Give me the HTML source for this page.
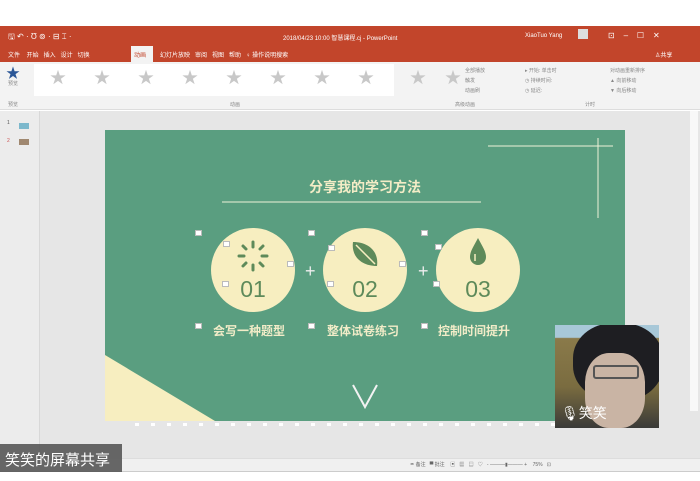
<!DOCTYPE html>
<html><head><meta charset="utf-8"><style>
*{margin:0;padding:0;box-sizing:border-box}
body{width:700px;height:481px;background:#fff;position:relative;overflow:hidden;font-family:"Liberation Sans","Noto Sans CJK SC",sans-serif}
.a{position:absolute}
.t{font-size:6px;color:#fff}
.rt{font-size:5px;color:#888}
.circ{position:absolute;width:84px;height:84px;border-radius:50%;background:#f7eec0}
.num{position:absolute;width:100%;top:50px;text-align:center;font-size:23px;color:#5e8a5a;line-height:22px}
.lbl{position:absolute;font-size:12px;font-weight:bold;color:#f2ecc8}
.sq{position:absolute;width:7px;height:6px;background:#fff;border:1px solid #bbb;font-size:4px}
.plus{position:absolute;color:#eee;font-size:18px;line-height:18px}
</style></head><body>
<div class="a" style="left:0;top:26px;width:700px;height:36px;background:#c2452b"></div>
<div class="a t" style="left:8px;top:31px;font-size:8px">🖫 ↶ · Ʊ ⊚ · ⊟ ⌶ ·</div>
<div class="a t" style="left:283px;top:33px">2018/04/23 10:00 智慧课程.cj - PowerPoint</div>
<div class="a t" style="left:525px;top:33px">XiaoTuo Yang</div>
<div class="a" style="left:578px;top:29px;width:10px;height:10px;background:#ddd"></div>
<div class="a t" style="left:608px;top:31px;font-size:8px">⊡ &nbsp;&nbsp; – &nbsp;&nbsp; ☐ &nbsp;&nbsp; ✕</div>
<div class="a t" style="left:8px;top:50px">文件 &nbsp;&nbsp; 开始 &nbsp; 插入 &nbsp; 设计 &nbsp; 切换</div>
<div class="a" style="left:131px;top:46px;width:22px;height:16px;background:#f3f3f3"></div>
<div class="a" style="left:134px;top:50px;font-size:6px;color:#c2452b">动画</div>
<div class="a t" style="left:160px;top:50px">幻灯片放映 &nbsp; 审阅 &nbsp; 视图 &nbsp; 帮助 &nbsp; ♀ 操作说明搜索</div>
<div class="a t" style="left:655px;top:50px">♙共享</div>
<div class="a" style="left:0;top:62px;width:700px;height:48px;background:#f3f3f3;border-bottom:1px solid #ddd"></div>
<div class="a" style="left:34px;top:64px;width:360px;height:32px;background:#fff"></div>
<div class="a" style="left:6px;top:63px;font-size:14px;color:#2b5797">★</div>
<div class="a rt" style="left:8px;top:80px">预览</div>
<div class="a rt" style="left:8px;top:101px">预览</div>
<div class="a" style="left:50px;top:64px;font-size:16px;color:#c8c8c8;letter-spacing:28px">★★★★★★★★</div>
<div class="a" style="left:410px;top:64px;font-size:16px;color:#c8c8c8">★</div>
<div class="a" style="left:445px;top:64px;font-size:16px;color:#c8c8c8">★</div>
<div class="a rt" style="left:465px;top:66px;line-height:10px">全部播放<br>触发<br>动画刷</div>
<div class="a rt" style="left:525px;top:66px;line-height:10px">▸ 开始: 单击时<br>◷ 持续时间:<br>◷ 延迟:</div>
<div class="a rt" style="left:610px;top:66px;line-height:10px">对动画重新排序<br>▲ 向前移动<br>▼ 向后移动</div>
<div class="a rt" style="left:230px;top:101px">动画</div>
<div class="a rt" style="left:455px;top:101px">高级动画</div>
<div class="a rt" style="left:585px;top:101px">计时</div>
<div class="a" style="left:0;top:111px;width:700px;height:347px;background:#e6e6e6"></div>
<div class="a" style="left:0;top:111px;width:40px;height:347px;background:#ececec;border-right:1px solid #d8d8d8"></div>
<div class="a rt" style="left:7px;top:120px;color:#555">1</div>
<div class="a" style="left:19px;top:123px;width:10px;height:6px;background:#7cb8cc"></div>
<div class="a rt" style="left:7px;top:138px;color:#c55">2</div>
<div class="a" style="left:19px;top:139px;width:10px;height:6px;background:#a08870"></div>
<div class="a" style="left:690px;top:111px;width:8px;height:300px;background:#f8f8f8"></div>
<!-- slide -->
<div class="a" style="left:105px;top:130px;width:520px;height:291px;background:#5a9e80;overflow:hidden">
<svg class="a" style="left:0;top:0" width="520" height="291">
<polygon points="0,225 110,291 0,291" fill="#f7eec0"/>
<line x1="383" y1="16" x2="508" y2="16" stroke="#eef3d8" stroke-width="1"/>
<line x1="493" y1="8" x2="493" y2="88" stroke="#eef3d8" stroke-width="1"/>
<line x1="117" y1="72" x2="376" y2="72" stroke="#eef3d8" stroke-width="1"/>
<polyline points="248,255 260,277 272,255" fill="none" stroke="#f2f2f2" stroke-width="2"/>
</svg>
<div class="a" style="left:0;top:47px;width:520px;text-align:center;font-size:14px;font-weight:bold;color:#f3ecc6">分享我的学习方法</div>
<div class="circ" style="left:106px;top:98px"><div class="num">01</div>
<svg class="a" style="left:24px;top:10px" width="36" height="36" stroke="#5e8a5a" stroke-width="3" stroke-linecap="round"><line x1="18" y1="4" x2="18" y2="9"/><line x1="18" y1="27" x2="18" y2="32"/><line x1="4" y1="18" x2="9" y2="18"/><line x1="27" y1="18" x2="32" y2="18"/><line x1="8" y1="8" x2="11" y2="11"/><line x1="25" y1="25" x2="28" y2="28"/><line x1="8" y1="28" x2="11" y2="25"/><line x1="25" y1="11" x2="28" y2="8"/></svg></div>
<div class="circ" style="left:218px;top:98px"><div class="num">02</div>
<svg class="a" style="left:26px;top:10px" width="32" height="32"><path d="M4,4 C20,4 30,14 28,28 C12,28 2,18 4,4Z" fill="#5e8a5a"/><line x1="7" y1="7" x2="26" y2="26" stroke="#f7eec0" stroke-width="1.5"/></svg></div>
<div class="circ" style="left:331px;top:98px"><div class="num">03</div>
<svg class="a" style="left:32px;top:8px" width="20" height="32"><path d="M10,2 C14,10 18,15 18,21 A8,8 0 0 1 2,21 C2,15 6,10 10,2Z" fill="#5e8a5a"/><path d="M7,18 L7,25" stroke="#f7eec0" stroke-width="1.5"/></svg></div>
<div class="plus" style="left:200px;top:132px">+</div>
<div class="plus" style="left:313px;top:132px">+</div>
<div class="sq" style="left:90px;top:100px"></div><div class="sq" style="left:203px;top:100px"></div><div class="sq" style="left:316px;top:100px"></div>
<div class="sq" style="left:118px;top:111px"></div><div class="sq" style="left:182px;top:131px"></div><div class="sq" style="left:117px;top:151px"></div>
<div class="sq" style="left:223px;top:115px"></div><div class="sq" style="left:294px;top:131px"></div><div class="sq" style="left:222px;top:151px"></div>
<div class="sq" style="left:330px;top:114px"></div><div class="sq" style="left:328px;top:151px"></div>
<div class="sq" style="left:90px;top:193px"></div><div class="sq" style="left:203px;top:193px"></div><div class="sq" style="left:316px;top:193px"></div>
<div class="lbl" style="left:108px;top:192px">会写一种题型</div>
<div class="lbl" style="left:222px;top:192px">整体试卷练习</div>
<div class="lbl" style="left:333px;top:192px">控制时间提升</div>
</div>
<div class="a" style="left:135px;top:423px;width:420px;height:3px;background:repeating-linear-gradient(90deg,#fff 0 4px,transparent 4px 16px)"></div>
<!-- webcam -->
<div class="a" style="left:555px;top:325px;width:104px;height:103px;background:linear-gradient(180deg,#a8c8d8 0,#a8c8d8 12%,#8a7a4a 13%,#7a6c40 60%,#3a3a38 100%);overflow:hidden">
<div class="a" style="left:18px;top:-2px;width:90px;height:78px;border-radius:45%;background:#1e1e22"></div>
<div class="a" style="left:30px;top:28px;width:60px;height:75px;border-radius:40%;background:#c9b4a4"></div>
<div class="a" style="left:38px;top:40px;width:46px;height:14px;border:2px solid #555;border-radius:3px"></div>
<div class="a" style="left:6px;top:78px;font-size:14px;color:#fff">🎙笑笑</div>
</div>
<!-- status -->
<div class="a" style="left:0;top:458px;width:700px;height:14px;background:#f0f0f0;border-top:1px solid #ddd;border-bottom:1px solid #ccc"></div>
<div class="a rt" style="left:410px;top:461px;color:#666">≐ 备注 &nbsp; ▀ 批注 &nbsp;&nbsp; ▣ &nbsp; ▦ &nbsp; ▤ &nbsp; ♡ &nbsp; - ———▮——— + &nbsp;&nbsp; 75% &nbsp; ⊡</div>
<div class="a" style="left:0;top:444px;width:122px;height:28px;background:#5a5a5a;opacity:.92"></div>
<div class="a" style="left:5px;top:449px;font-size:15px;color:#fff">笑笑的屏幕共享</div>
</body></html>
